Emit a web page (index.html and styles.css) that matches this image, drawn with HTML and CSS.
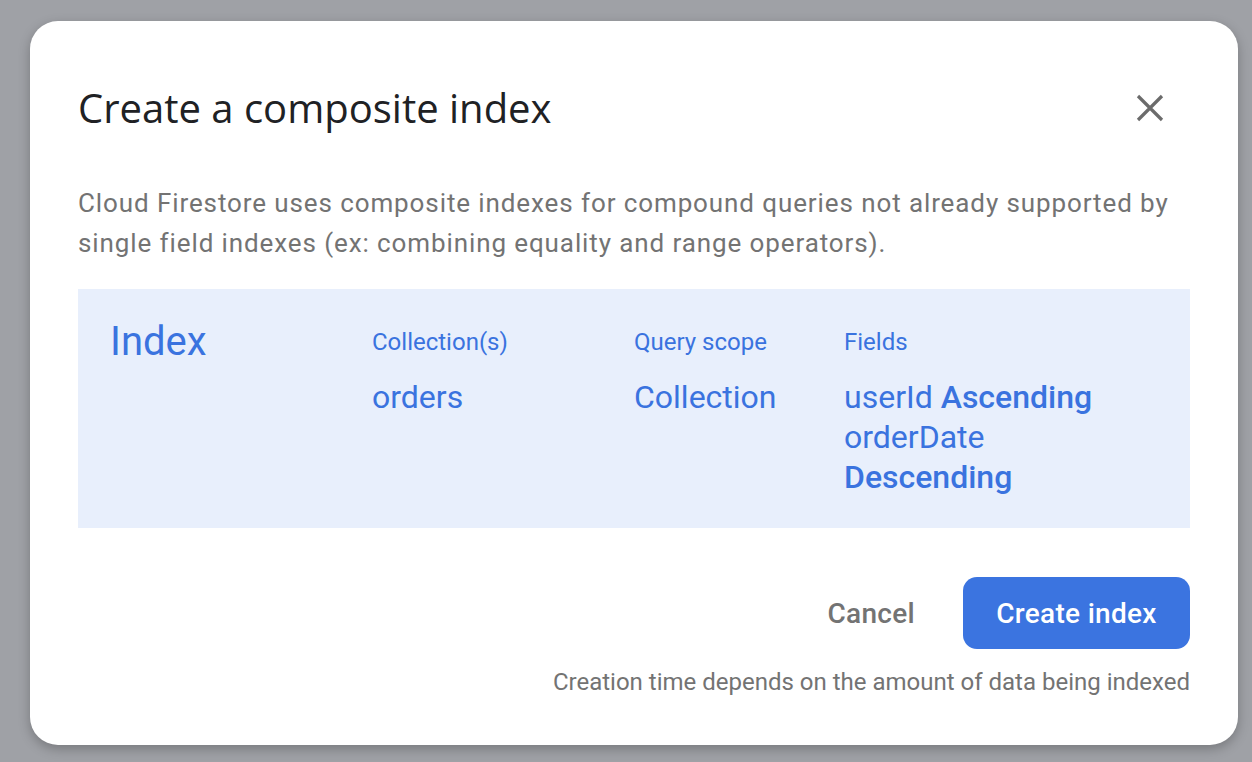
FILE: index.html
```html
<!DOCTYPE html>
<html>
<head>
<meta charset="utf-8">
<link rel="stylesheet" href="styles.css">
</head>
<body>
<div class="dialog">
  <div class="header">
    <h1 class="title">Create a composite index</h1>
    <button class="close" aria-label="Close">
      <svg width="28" height="28" viewBox="0 0 28 28"><path d="M2 2 L26 26 M26 2 L2 26" stroke="#6b6b6b" stroke-width="3.2" stroke-linecap="butt"/></svg>
    </button>
  </div>
  <p class="desc">Cloud Firestore uses composite indexes for compound queries not already supported by single field indexes (ex: combining equality and range operators).</p>
  <div class="index-box">
    <div class="col col-index">Index</div>
    <div class="col col-coll">
      <div class="label">Collection(s)</div>
      <div class="value">orders</div>
    </div>
    <div class="col col-scope">
      <div class="label">Query scope</div>
      <div class="value">Collection</div>
    </div>
    <div class="col col-fields">
      <div class="label">Fields</div>
      <div class="value fields">
        <div>userId <b>Ascending</b></div>
        <div>orderDate <b>Descending</b></div>
      </div>
    </div>
  </div>
  <div class="actions">
    <button class="btn-cancel">Cancel</button>
    <button class="btn-create">Create index</button>
  </div>
  <div class="note">Creation time depends on the amount of data being indexed</div>
</div>
</body>
</html>
```
FILE: styles.css
```css
html, body {
  margin: 0;
  padding: 0;
  height: 100%;
}
body {
  background: #9fa1a6;
  font-family: Roboto, "Liberation Sans", sans-serif;
  overflow: hidden;
}
.dialog {
  box-sizing: border-box;
  margin: 21px 0 0 30px;
  width: 1208px;
  height: 724px;
  background: #fff;
  border-radius: 28px;
  box-shadow: 0 4px 12px rgba(0,0,0,0.25);
  padding: 0 48px;
  display: flex;
  flex-direction: column;
}
.header {
  display: flex;
  align-items: center;
  justify-content: space-between;
  padding-top: 63px;
}
.title {
  margin: 0;
  font-family: "Open Sans", sans-serif;
  font-weight: 400;
  font-size: 40px;
  line-height: 48px;
  color: #202124;
  letter-spacing: 0;
}
.close {
  background: none;
  border: 0;
  padding: 0;
  margin-right: 26px;
  width: 28px;
  height: 28px;
  display: flex;
}
.desc {
  margin: 51px 0 0 0;
  font-size: 26px;
  line-height: 40px;
  color: #737373;
  letter-spacing: 0.9px;
}
.index-box {
  margin-top: 26px;
  background: #e8effc;
  color: #3a73df;
  padding: 26px 32px 32px;
  display: flex;
  height: 239px;
  box-sizing: border-box;
}
.col-index {
  width: 262px;
  font-size: 40px;
  line-height: 54px;
}
.col-coll { width: 262px; }
.col-scope { width: 210px; }
.col-fields { width: 270px; }
.label {
  font-size: 24px;
  line-height: 30px;
  margin-top: 12px;
}
.value {
  font-size: 32px;
  line-height: 40px;
  margin-top: 20px;
}
.value b { font-weight: 500; }
.actions {
  display: flex;
  justify-content: flex-end;
  align-items: center;
  margin-top: 49px;
  gap: 48px;
}
.btn-cancel {
  background: none;
  border: 0;
  font-family: Roboto, sans-serif;
  font-size: 28px;
  font-weight: 500;
  color: #737373;
  padding: 0;
  letter-spacing: 0.3px;
}
.btn-create {
  background: #3b74e0;
  color: #fff;
  border: 0;
  border-radius: 14px;
  height: 72px;
  width: 227px;
  font-family: Roboto, sans-serif;
  font-size: 28px;
  font-weight: 500;
  letter-spacing: 0.3px;
}
.note {
  text-align: right;
  margin-top: 17px;
  font-size: 24px;
  line-height: 32px;
  color: #737373;
}
```
